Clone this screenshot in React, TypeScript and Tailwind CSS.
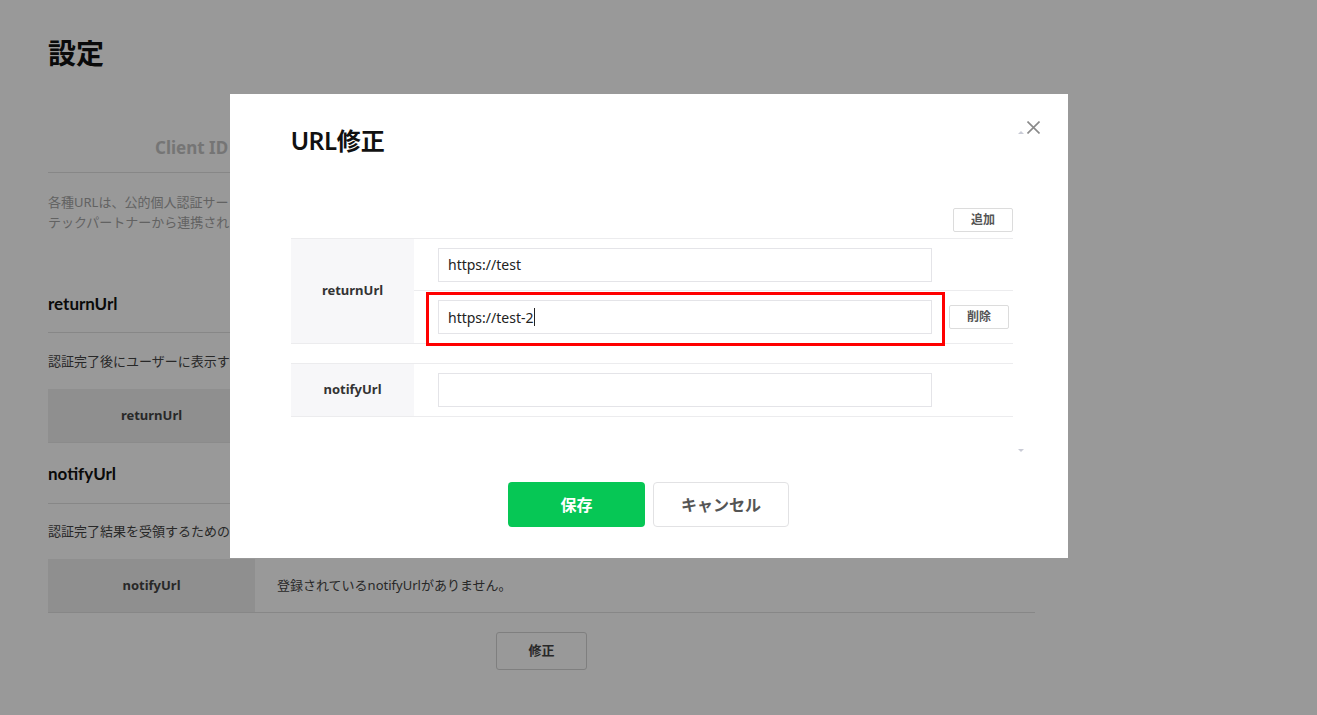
import React from "react";

const sans = "font-['Noto_Sans','Noto_Sans_CJK_JP',sans-serif]";
const lato = "font-['Lato','Noto_Sans_CJK_JP',sans-serif]";

function Background() {
  return (
    <div className={`w-[1317px] h-[715px] bg-white pl-[48px] pr-[282px] pt-[33px] ${sans}`}>
      <h1 className={`text-[28px] leading-[40px] font-bold text-[#111] ${sans}`}>設定</h1>
      <div className="mt-[53px] flex border-b border-[#e2e2e2] h-[47px]">
        <div className="w-[329px] pl-[107px] pt-[10px] text-[17px] font-bold text-[#c4c4c4] leading-[24px]">Client ID</div>
      </div>
      <p className="mt-[19px] text-[13px] leading-[20px] text-[#a4a4a4]">
        各種URLは、公的個人認証サービスと連携する際に使用されます。
        <br />
        テックパートナーから連携されたURLを登録してください。
      </p>
      <h2 className={`mt-[60px] text-[17px] font-bold leading-[24px] text-[#111] ${lato}`}>returnUrl</h2>
      <div className="mt-[16px] border-t border-[#e2e2e2]" />
      <p className="mt-[18px] text-[13px] leading-[20px] text-[#444]">認証完了後にユーザーに表示するページのURLです。</p>
      <div className="mt-[18px] flex h-[54px] border-b border-[#e8e8e8]">
        <div className="w-[207px] bg-[#eeeeee] flex items-center justify-center text-[13px] font-bold text-[#444]">returnUrl</div>
        <div className="flex-1" />
      </div>
      <h2 className={`mt-[19px] text-[17px] font-bold leading-[24px] text-[#111] ${lato}`}>notifyUrl</h2>
      <div className="mt-[17px] border-t border-[#e2e2e2]" />
      <p className="mt-[17px] text-[13px] leading-[20px] text-[#444]">認証完了結果を受領するためのURLです。</p>
      <div className="mt-[18px] flex h-[54px] border-b border-[#e2e2e2]">
        <div className="w-[207px] bg-[#eeeeee] flex items-center justify-center text-[13px] font-bold text-[#444]">notifyUrl</div>
        <div className="flex-1 flex items-center pl-[22px] text-[13px] text-[#444]">登録されているnotifyUrlがありません。</div>
      </div>
      <div className="mt-[19px] flex justify-center">
        <button className="w-[91px] h-[38px] rounded-[3px] border border-[#d4d4d4] bg-white text-[13px] font-bold text-[#444]">修正</button>
      </div>
    </div>
  );
}

function Input({ value, cursor }: { value: string; cursor?: boolean }) {
  return (
    <div className="w-[494px] h-[34px] border border-[#e4e4e8] bg-white flex items-center pl-[9px] text-[14px] text-[#222]">
      <span>{value}</span>
      {cursor && <span className="inline-block w-px h-[18px] bg-[#222] ml-[1px]" />}
    </div>
  );
}

function SmallBtn({ label }: { label: string }) {
  return (
    <button className="w-[60px] h-[24px] border border-[#dcdcdc] rounded-[2px] bg-white text-[12px] font-bold text-[#555] flex items-center justify-center">
      {label}
    </button>
  );
}

function Dialog() {
  return (
    <div className={`absolute left-[230px] top-[94px] w-[838px] h-[464px] bg-white pl-[61px] pr-[55px] pt-[30px] ${sans}`}>
      <h3 className={`text-[24px] leading-[34px] font-bold text-[#111] ${lato}`}>URL修正</h3>
      <button className="absolute left-[797px] top-[27px] w-[13px] h-[13px]">
        <svg viewBox="0 0 13 13" className="w-[13px] h-[13px]">
          <path d="M0.5 0.5 L12.5 12.5 M12.5 0.5 L0.5 12.5" stroke="#8a8a8a" strokeWidth="1.6" fill="none" />
        </svg>
      </button>
      <div className="absolute left-[788px] top-[37px] w-0 h-0 border-l-[3px] border-r-[3px] border-b-[3px] border-l-transparent border-r-transparent border-b-[#c9cbd6]" />
      <div className="absolute left-[788px] top-[355px] w-0 h-0 border-l-[3px] border-r-[3px] border-t-[3px] border-l-transparent border-r-transparent border-t-[#c9cbd6]" />

      <div className="mt-[50px] flex justify-end">
        <SmallBtn label="追加" />
      </div>
      <div className="mt-[6px] flex border-t border-b border-[#ececee]">
        <div className="w-[123px] bg-[#f7f7f9] flex items-center justify-center text-[13px] font-bold text-[#333]">returnUrl</div>
        <div className="flex-1 flex flex-col">
          <div className="h-[52px] flex items-center pl-[24px] border-b border-[#ececee]">
            <Input value="https://test" />
          </div>
          <div className="relative h-[52px] flex items-center pl-[24px]">
            <Input value="https://test-2" cursor />
            <div className="ml-[17px]">
              <SmallBtn label="削除" />
            </div>
            <div className="absolute left-[12px] top-[1px] w-[519px] h-[54px] border-[3px] border-[#ff0000]" />
          </div>
        </div>
      </div>
      <div className="mt-[19px] flex h-[54px] border-t border-b border-[#ececee]">
        <div className="w-[123px] bg-[#f7f7f9] flex items-center justify-center text-[13px] font-bold text-[#333]">notifyUrl</div>
        <div className="flex-1 flex items-center pl-[24px]">
          <Input value="" />
        </div>
      </div>
      <div className="mt-[65px] flex justify-center gap-[8px] pr-[7px]">
        <button className="w-[137px] h-[45px] rounded-[4px] bg-[#06c755] text-white text-[16px] font-bold">保存</button>
        <button className="w-[136px] h-[45px] rounded-[4px] bg-white border border-[#e2e2e4] text-[#555] text-[16px] font-bold">キャンセル</button>
      </div>
    </div>
  );
}

export default function App() {
  return (
    <div className="relative w-[1317px] h-[715px] overflow-hidden">
      <Background />
      <div className="absolute inset-0 bg-black/40" />
      <Dialog />
    </div>
  );
}
